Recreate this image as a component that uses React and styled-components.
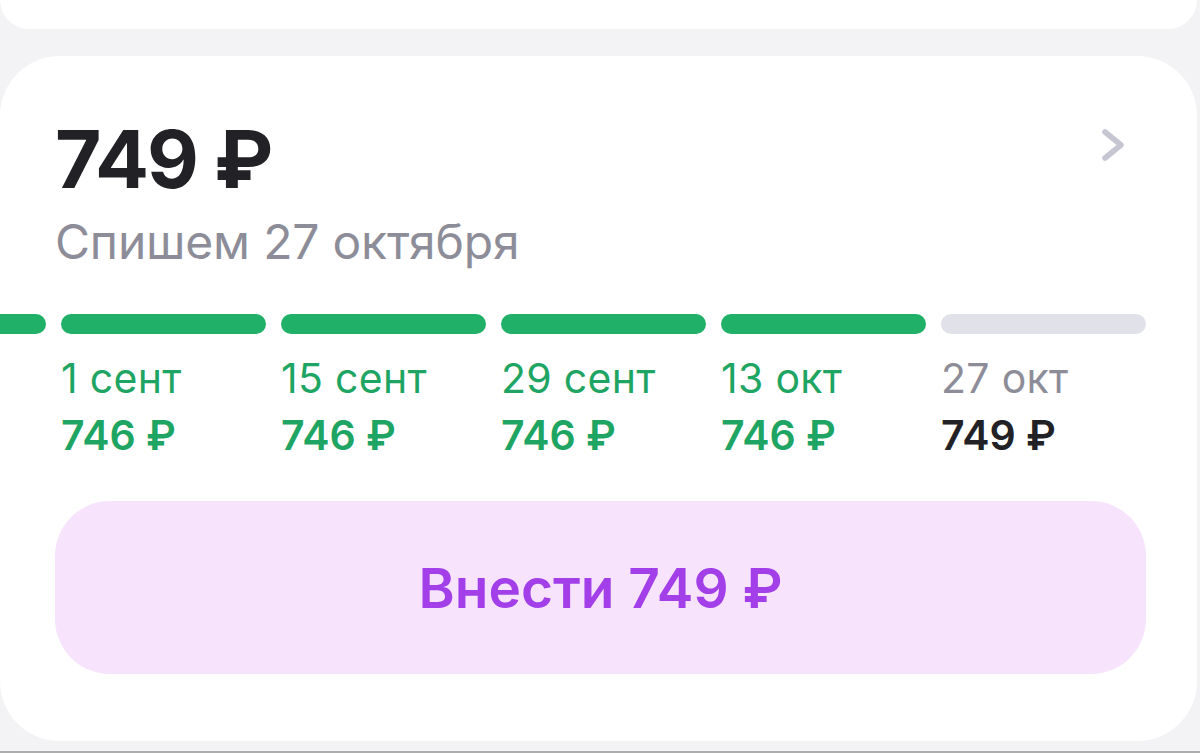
import React from 'react';
import styled, { createGlobalStyle } from 'styled-components';

// first entry is scrolled off to the left, only its bar tail shows
const payments = [
	{ id: 'aug', paid: true, offscreen: true },
	{ id: 'sep1', date: '1 сент', amount: '746 ₽', paid: true },
	{ id: 'sep15', date: '15 сент', amount: '746 ₽', paid: true },
	{ id: 'sep29', date: '29 сент', amount: '746 ₽', paid: true },
	{ id: 'oct13', date: '13 окт', amount: '746 ₽', paid: true },
	{ id: 'oct27', date: '27 окт', amount: '749 ₽', paid: false }
];

const GlobalStyle = createGlobalStyle`
	html, body {
		margin: 0;
		padding: 0;
		background: #f3f3f5;
	}
	body {
		font-family: Inter, 'Noto Sans', sans-serif;
		-webkit-font-smoothing: antialiased;
	}
`;

const App = () => {
	return (
		<Page>
			<GlobalStyle />
			<TopCard />
			<Card>
				<Header>
					<div>
						<Total>749 ₽</Total>
						<DueDate>Спишем 27 октября</DueDate>
					</div>
					<Chevron width="30" height="40" viewBox="0 0 30 40">
						<polyline points="4,5 20,18 4,31" />
					</Chevron>
				</Header>
				<Schedule>
					<ScheduleRow>
						{payments.map((p) => (
							<Payment key={p.id}>
								<Bar paid={p.paid} />
								{!p.offscreen && (
									<>
										<PaymentDate paid={p.paid}>{p.date}</PaymentDate>
										<PaymentAmount paid={p.paid}>{p.amount}</PaymentAmount>
									</>
								)}
							</Payment>
						))}
					</ScheduleRow>
				</Schedule>
				<PayButton>Внести 749 ₽</PayButton>
			</Card>
			<BottomRule />
		</Page>
	);
};

const Page = styled.div`
	height: 753px;
	display: flex;
	flex-direction: column;
	overflow: hidden;
`;

const TopCard = styled.div`
	height: 29px;
	margin: 0 3px 0 0;
	background: #ffffff;
	border-radius: 0 0 60px 60px;
`;

const Card = styled.div`
	margin: 27px 3px 0 0;
	padding: 63px 51px 67px 55px;
	background: #ffffff;
	border-radius: 60px;
`;

const Header = styled.div`
	display: flex;
	justify-content: space-between;
	align-items: flex-start;
`;

const Total = styled.div`
	font-size: 80px;
	line-height: 80px;
	font-weight: 700;
	color: #222226;
	letter-spacing: -2px;
`;

const DueDate = styled.div`
	margin-top: 15px;
	font-size: 48px;
	line-height: 56px;
	font-weight: 400;
	color: #8d8d99;
	letter-spacing: -0.2px;
`;

const Chevron = styled.svg`
	margin: 8px 15px 0 0;
	fill: none;
	stroke: #c6c6d2;
	stroke-width: 5.5;
	stroke-linecap: round;
	stroke-linejoin: round;
`;

const Schedule = styled.div`
	margin: 44px -51px 0 -55px;
	overflow: hidden;
`;

const ScheduleRow = styled.div`
	display: flex;
	gap: 15px;
	margin-left: -159px;
`;

const Payment = styled.div`
	flex: 0 0 205px;
	display: flex;
	flex-direction: column;
`;

const Bar = styled.div`
	height: 20px;
	border-radius: 10px;
	background: ${(p) => (p.paid ? '#20b068' : '#e1e1ea')};
`;

const PaymentDate = styled.div`
	margin-top: 20px;
	font-size: 41px;
	line-height: 48px;
	font-weight: 400;
	letter-spacing: 0.3px;
	color: ${(p) => (p.paid ? '#1fa563' : '#8d8d99')};
	white-space: nowrap;
`;

const PaymentAmount = styled.div`
	margin-top: 9px;
	font-size: 41px;
	line-height: 48px;
	font-weight: 600;
	color: ${(p) => (p.paid ? '#1fa563' : '#222226')};
	white-space: nowrap;
`;

const PayButton = styled.button`
	display: block;
	width: 100%;
	height: 173px;
	margin-top: 42px;
	border: none;
	border-radius: 55px;
	background: #f7e4fc;
	color: #a23fe8;
	font-family: Inter, 'Noto Sans', sans-serif;
	font-size: 55px;
	font-weight: 600;
	cursor: pointer;
`;

const BottomRule = styled.div`
	margin-top: auto;
	height: 2px;
	background: #adadad;
`;

export default App;
